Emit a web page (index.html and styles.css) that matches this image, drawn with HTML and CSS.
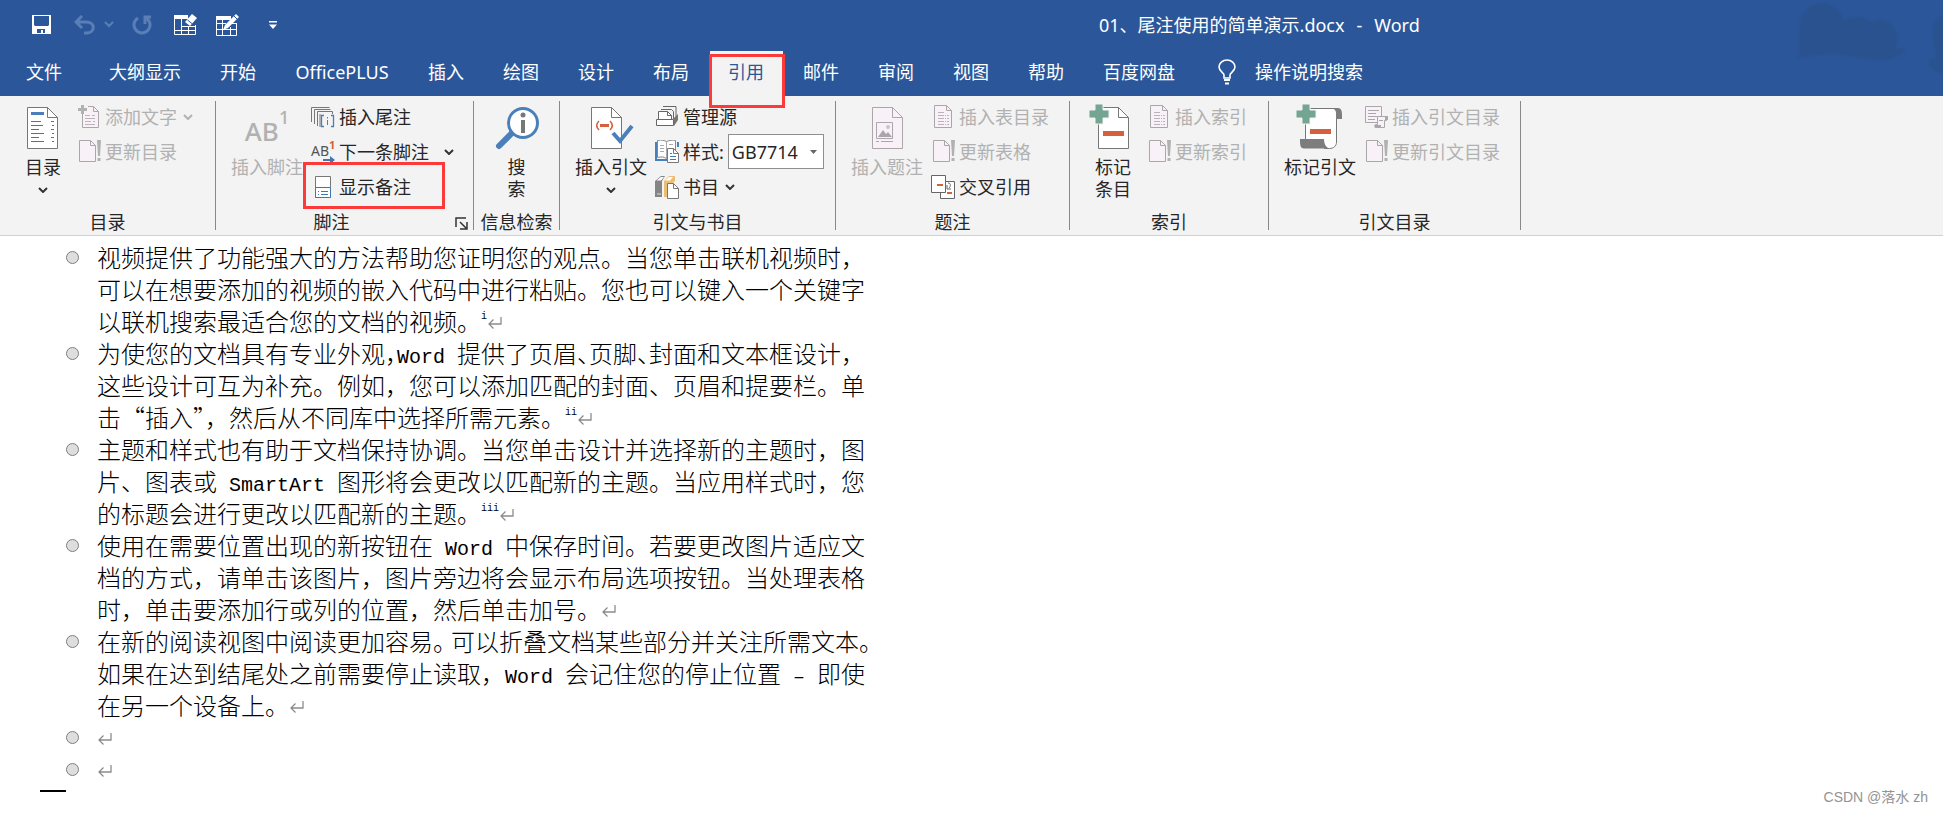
FILE: index.html
```html
<!DOCTYPE html>
<html lang="zh-CN">
<head>
<meta charset="utf-8">
<title>01、尾注使用的简单演示.docx - Word</title>
<link rel="stylesheet" href="styles.css">
</head>
<body>
<svg class="defs" aria-hidden="true">
  <symbol id="chev" viewBox="0 0 10 6"><path d="M1 1l4 4 4-4" fill="none" stroke="currentColor" stroke-width="2"/></symbol>
  <symbol id="update" viewBox="0 0 24 24"><path d="M2.500 .5h11l5 5v16h-16z" fill="#f8f2f8" stroke="#aaa6aa"/><path d="M13.500 .5v5h5" fill="none" stroke="#aaa6aa"/><path d="M20 0h4l-1 16h-2zM20.500 18h3v3h-3z" fill="#b1b1b1"/></symbol>
  <symbol id="list" viewBox="0 0 24 24"><path d="M3.500 .5h12l5 5v17h-17z" fill="#f8f2f8" stroke="#aaa6aa"/><path d="M15.500 .5v5h5" fill="none" stroke="#aaa6aa"/><path d="M7 7.500h6M7 10.500h11M7 13.500h11M7 16.500h11M7 19.500h11" stroke="#b9b5b9" stroke-dasharray="6 1 1 1"/></symbol>
  <symbol id="ret" viewBox="0 0 16 14"><path d="M14 1v7H2M6.500 3.500L2 8l4.500 4.500" fill="none" stroke="#8c8c8c" stroke-width="1.300"/></symbol>
</svg>

<header class="top">
  <svg class="art" viewBox="0 0 200 96" aria-hidden="true">
    <path d="M56 58V30C56 14 66 3 79 3c11 0 18 7 22 18 8-6 21-6 27 2 5-5 16-5 21 3 8 10 7 16 2 22l11 1c-3 8-18 13-32 11-22-3-38-8-54-5-8 1-14 1-20 3z"/>
    <path d="M200 16c-9 2-12 14-9 30 1 6 2 10 4 13l-10 0c1 8 7 13 15 15z"/>
  </svg>
  <div class="titlebar">
    <div class="qat">
      <button type="button" aria-label="保存"><svg width="20" height="20" viewBox="0 0 20 20"><path d="M0 0h19v19H0z" fill="#fff"/><path d="M2 1h15v9l-1 1H3l-1-1z" fill="#2b579a"/><path d="M5 14h8v4h-2v-3h-2v3H5z" fill="#2b579a"/></svg></button>
      <button type="button" aria-label="撤消" class="q-undo"><svg width="40" height="20" viewBox="0 0 40 20" fill="none" stroke="#5a7eb6" stroke-width="3"><path d="M8 1L2 7l6 6M2 7h10c10 0 9 11 1 11h-3"/><path d="M31 7l4 4 4-4" stroke-width="2"/></svg></button>
      <button type="button" aria-label="重复" class="q-redo"><svg width="20" height="20" viewBox="0 0 20 20" fill="none" stroke="#5a7eb6" stroke-width="3"><path d="M6 3a8 8 0 1 0 8 0M13 9V2h6"/></svg></button>
      <button type="button" aria-label="擦除表格" class="q-erase"><svg width="24" height="22" viewBox="0 0 24 22"><path d="M0 1h14v4H0z" fill="#fff"/><path d="M.5 4v16.500h21V11M7.500 5v15M14.500 13v7M7 12.500h14M1 16.500h20" fill="none" stroke="#fff"/><path d="M11 8l7-8 5 4-7 8z" fill="#fff"/><path d="M13.500 6l5 4" stroke="#2b579a"/></svg></button>
      <button type="button" aria-label="绘制表格" class="q-draw"><svg width="24" height="24" viewBox="0 0 24 24"><path d="M0 3h15v4H0z" fill="#fff"/><path d="M.5 4v18.500h20V10M6.500 6v16M14.500 14v8M1 10.500h9M1 16.500h19M15 10.500h5" fill="none" stroke="#fff"/><path d="M9 12L20 1l3 3L12 15l-5 2z" fill="#fff"/><path d="M18 3l3 3" stroke="#2b579a"/></svg></button>
      <button type="button" aria-label="自定义快速访问工具栏" class="q-more"><svg width="8" height="8" viewBox="0 0 8 8" fill="#fff"><path d="M0 0h8v1.500H0zM0 3.500h8L4 8z"/></svg></button>
    </div>
    <div class="doc-title"><span>01、尾注使用的简单演示.docx</span><span>-</span><span>Word</span></div>
  </div>
  <nav class="tabs">
    <button type="button" class="tab file">文件</button>
    <button type="button" class="tab">大纲显示</button>
    <button type="button" class="tab">开始</button>
    <button type="button" class="tab plus">OfficePLUS</button>
    <button type="button" class="tab">插入</button>
    <button type="button" class="tab">绘图</button>
    <button type="button" class="tab">设计</button>
    <button type="button" class="tab">布局</button>
    <button type="button" class="tab active">引用<span class="mark mark-tab"></span></button>
    <button type="button" class="tab">邮件</button>
    <button type="button" class="tab">审阅</button>
    <button type="button" class="tab">视图</button>
    <button type="button" class="tab">帮助</button>
    <button type="button" class="tab">百度网盘</button>
    <button type="button" class="tell"><svg width="18" height="26" viewBox="0 0 18 26" fill="none" stroke="#fff" stroke-width="1.600"><path d="M6 19v-3c0-2-5-4-5-8a8 7 0 0 1 16 0c0 4-5 6-5 8v3z"/><path d="M6 21h6M7 24.500h4" stroke-width="2"/></svg>操作说明搜索</button>
  </nav>
</header>

<section class="ribbon">
  <div class="group g-toc">
    <div class="tools">
      <button type="button" class="big"><svg width="48" height="48" viewBox="0 0 48 48"><path d="M8.500 3.500h20l10 10v31h-30z" fill="#fff" stroke="#777"/><path d="M28.500 3.500v10h10" fill="none" stroke="#777"/><path d="M12 8h13v3H12z" fill="#4a7fb9"/><path d="M12 17.500h10M12 21.500h12M12 25.500h8M12 29.500h13M12 33.500h8M12 37.500h13M32 17.500h3M33 21.500h2M32 25.500h3M33 29.500h2M32 33.500h3M33 37.500h2" stroke="#3f77b5"/></svg><span>目录</span><svg class="chev" width="10" height="6"><use href="#chev"/></svg></button>
      <div class="col">
        <button type="button" class="small" disabled><svg width="24" height="24" viewBox="0 0 24 24"><path d="M5.500 8v14.500h16v-16l-5-5H11" fill="#f8f2f8" stroke="#aaa6aa"/><path d="M16.500 1.500v5h5" fill="none" stroke="#aaa6aa"/><path d="M8 10.500h5M8 13.500h10M8 16.500h6M8 19.500h10M15 10.500h3M16 16.500h2" stroke="#b9b5b9"/><path d="M4 0h3v3h3v3H7v3H4V6H1V3h3z" fill="#b1b1b1"/></svg><span>添加文字</span><svg class="chev" width="10" height="6"><use href="#chev"/></svg></button>
        <button type="button" class="small" disabled><svg width="24" height="24"><use href="#update"/></svg><span>更新目录</span></button>
      </div>
    </div>
    <div class="label">目录</div>
  </div>

  <div class="group g-foot">
    <div class="tools">
      <button type="button" class="big" disabled><span class="ab"><span class="ab-text">AB</span><span class="ab-num">1</span></span><span>插入脚注</span></button>
      <div class="col">
        <button type="button" class="small"><svg width="24" height="24" viewBox="0 0 24 24" fill="none" stroke="#777"><path d="M.5 17V2.500h18M3.500 19V4.500h16M6.500 21V6.500h15V9M9 22V9"/><path d="M13 10.500h-2.500v11H13M20 10.500h2.500v11H20" stroke="#4a7fb9" stroke-width="1.300"/><path d="M16.500 12v1.500M16.500 15v5" stroke="#4a7fb9"/></svg><span>插入尾注</span></button>
        <button type="button" class="small"><span class="ab-small"><span>AB</span><span class="ab-red">1</span><svg width="12" height="8" viewBox="0 0 12 8"><path d="M0 3h7V0l5 4-5 4V5H0z" fill="#3f77b5"/></svg></span><span>下一条脚注</span><svg class="chev far" width="10" height="6"><use href="#chev"/></svg></button>
        <button type="button" class="small"><svg width="24" height="24" viewBox="0 0 24 24"><path d="M4.500 1.500h15v21h-15z" fill="#fff" stroke="#777"/><path d="M4.500 12.500h15v10h-15z" fill="#fff" stroke="#3f77b5"/><path d="M7 16.500h1M7 19.500h1M10 16.500h7M10 19.500h7" stroke="#3f77b5"/></svg><span>显示备注</span><span class="mark mark-note"></span></button>
      </div>
    </div>
    <div class="label">脚注</div>
    <button type="button" class="launch" aria-label="脚注和尾注"><svg width="13" height="13" viewBox="0 0 13 13" fill="none" stroke="#333" stroke-width="1.500"><path d="M1 10V1h10M5 5l6 6M12 5v7H5"/></svg></button>
  </div>

  <div class="group g-search">
    <div class="tools">
      <button type="button" class="big"><svg width="48" height="48" viewBox="0 0 48 48"><path d="M20 28L6 42" stroke="#4a7fb9" stroke-width="6" stroke-linecap="round"/><circle cx="30" cy="19" r="14.500" fill="#fff" stroke="#4a7fb9" stroke-width="3"/><circle cx="30" cy="11" r="2.500" fill="#777"/><path d="M28 16h4v13h-4z" fill="#777"/></svg><span>搜<br>索</span></button>
    </div>
    <div class="label">信息检索</div>
  </div>

  <div class="group g-cite">
    <div class="tools">
      <button type="button" class="big"><svg width="48" height="48" viewBox="0 0 48 48"><path d="M4.500 3.500h20l10 10v31h-30z" fill="#fff" stroke="#777"/><path d="M24.500 3.500v10h10" fill="none" stroke="#777"/><path d="M12 17c-3 3-3 6 0 9M23 17c3 3 3 6 0 9" fill="none" stroke="#d65f3d" stroke-width="1.500"/><path d="M13 20h9v3h-9z" fill="#d65f3d"/><path d="M26 29l7 8 12-15" fill="none" stroke="#4a7fb9" stroke-width="4"/></svg><span>插入引文</span><svg class="chev" width="10" height="6"><use href="#chev"/></svg></button>
      <div class="col">
        <button type="button" class="small"><svg width="24" height="24" viewBox="0 0 24 24" fill="none" stroke="#666"><path d="M1.500 14.500h17v6h-17z" fill="#fff"/><path d="M3.500 14V6.500h9l4 4V14" fill="#fff"/><path d="M12.500 6.500v4h4M6 4.500h10.500l2 2V14M8 1.500h13v12"/><path d="M19 13l4-4v6l-4 6z" fill="#777" stroke="none"/></svg><span>管理源</span></button>
        <div class="small"><svg width="24" height="24" viewBox="0 0 24 24" fill="none"><path d="M1 2v18h11M23 2v5" stroke="#4a7fb9" stroke-width="2"/><path d="M2.500 .5c4-1 7 0 9 1 3-1 6-2 9-1v17c-4-1-7-1-9 1-3-2-5-2-9-1z" fill="#fff" stroke="#888"/><path d="M11.500 2v16M5 5.500h4M5 8.500h4M5 11.500h4M14 4.500h4" stroke="#aaa"/><path d="M12.500 8.500h6l5 5v9h-11z" fill="#fff" stroke="#777"/><path d="M18.500 8.500v5h5" stroke="#777"/><path d="M15 13.500h2M15 16.500h6M15 19.500h6" stroke="#3f77b5"/></svg><label for="style">样式:</label><span class="combo"><select id="style"><option>GB7714</option></select><svg width="7" height="4" viewBox="0 0 7 4" fill="#666"><path d="M0 0h7L3.500 4z"/></svg></span></div>
        <button type="button" class="small"><svg width="24" height="24" viewBox="0 0 24 24"><path d="M0 6l6-5h4L7 6v16H0z" fill="#858585"/><path d="M1.500 5.500L6 2h3L6 5.500z" fill="#fff"/><path d="M9 6l5-5h6v5l-4 4v12H9z" fill="#ecbd74"/><path d="M10 5.500L14 2h4l-3 3.500z" fill="#fff"/><path d="M2 19h4" stroke="#ddd"/><path d="M12.500 8.500h6l5 5v10h-11z" fill="#fff" stroke="#777"/><path d="M18.500 8.500v5h5" fill="none" stroke="#777"/></svg><span>书目</span><svg class="chev" width="10" height="6"><use href="#chev"/></svg></button>
      </div>
    </div>
    <div class="label">引文与书目</div>
  </div>

  <div class="group g-caption">
    <div class="tools">
      <button type="button" class="big" disabled><svg width="48" height="48" viewBox="0 0 48 48"><path d="M9.500 3.500h20l10 10v31h-30z" fill="#f8f2f8" stroke="#aaa6aa"/><path d="M29.500 3.500v10h10M13.500 18.500h16v16h-16z" fill="none" stroke="#aaa6aa"/><path d="M15 33l5-7 3 4 2-2 4 5z" fill="#a9a5a9"/><circle cx="25" cy="23" r="2" fill="#c9c5c9"/><path d="M13 37.500h3M18 37.500h12" stroke="#aaa6aa"/></svg><span>插入题注</span></button>
      <div class="col">
        <button type="button" class="small" disabled><svg width="24" height="24"><use href="#list"/></svg><span>插入表目录</span></button>
        <button type="button" class="small" disabled><svg width="24" height="24"><use href="#update"/></svg><span>更新表格</span></button>
        <button type="button" class="small"><svg width="24" height="24" viewBox="0 0 24 24" fill="#fff" stroke="#666"><path d="M9.500 6.500h14v17h-14z"/><path d="M.5 .5h14v17H.5z"/><path d="M6 9h6v2H6zM16 17h5v2h-5z" fill="#d65f3d" stroke="none"/><path d="M17 8c3 0 3 3 1 5m-2-3v4h4" fill="none"/></svg><span>交叉引用</span></button>
      </div>
    </div>
    <div class="label">题注</div>
  </div>

  <div class="group g-index">
    <div class="tools">
      <button type="button" class="big"><svg width="48" height="48" viewBox="0 0 48 48"><path d="M9.500 3.500h20l10 10v31h-30z" fill="#fff" stroke="#777"/><path d="M29.500 3.500v10h10" fill="none" stroke="#777"/><path d="M14 27h21v5H14z" fill="#d65f3d"/><path d="M6 0h8v6h6v8h-6v6H6v-6H0V6h6z" fill="#73a592" stroke="#f3f3f3"/></svg><span>标记<br>条目</span></button>
      <div class="col">
        <button type="button" class="small" disabled><svg width="24" height="24"><use href="#list"/></svg><span>插入索引</span></button>
        <button type="button" class="small" disabled><svg width="24" height="24"><use href="#update"/></svg><span>更新索引</span></button>
      </div>
    </div>
    <div class="label">索引</div>
  </div>

  <div class="group g-auth">
    <div class="tools">
      <button type="button" class="big"><svg width="48" height="48" viewBox="0 0 48 48"><path d="M9.500 36V4.500h31V38c0 4-3 6.500-7 6.500h-5L24 36z" fill="#fff" stroke="#777"/><path d="M36 4h6c3 0 4 3 4 6v5h-6V9c0-2-1-4-4-5z" fill="#7d7d7d"/><path d="M4 35h24c0 5 2 9 6 9.500H8c-4 0-4-4-4-9.500z" fill="#7d7d7d"/><path d="M14 25h21v5H14z" fill="#d65f3d"/><path d="M6 0h8v6h6v8h-6v6H6v-6H0V6h6z" fill="#73a592" stroke="#f3f3f3"/></svg><span>标记引文</span></button>
      <div class="col">
        <button type="button" class="small" disabled><svg width="24" height="24" viewBox="0 0 24 24" fill="#f8f2f8" stroke="#aaa6aa"><path d="M1.500 1.500h16v16h-16z"/><path d="M4 5.500h11M4 8.500h8M4 11.500h9M4 14.500h7"/><path d="M13.500 11.500h9v4h-2v7h-9v-3h2z"/><path d="M10 20h7v3h-6zM15 15h4v1h-4zM21 11h3v4h-3z" fill="#aaa6aa" stroke="none"/></svg><span>插入引文目录</span></button>
        <button type="button" class="small" disabled><svg width="24" height="24"><use href="#update"/></svg><span>更新引文目录</span></button>
      </div>
    </div>
    <div class="label">引文目录</div>
  </div>
</section>

<main class="page">
  <article class="doc">
    <p>视频提供了功能强大的方法帮助您证明您的观点。当您单击联机视频时，<br>可以在想要添加的视频的嵌入代码中进行粘贴。您也可以键入一个关键字<br>以联机搜索最适合您的文档的视频。<sup>i</sup><svg class="ret"><use href="#ret"/></svg></p>
    <p>为使您的文档具有专业外观<span class="half">，</span><span class="en">Word </span>提供了页眉<span class="half">、</span>页脚<span class="half">、</span>封面和文本框设计，<br>这些设计可互为补充。例如，您可以添加匹配的封面、页眉和提要栏。单<br>击“插入<span class="half">”</span>，然后从不同库中选择所需元素。<sup>ii</sup><svg class="ret"><use href="#ret"/></svg></p>
    <p>主题和样式也有助于文档保持协调。当您单击设计并选择新的主题时，图<br>片、图表或<span class="en"> SmartArt </span>图形将会更改以匹配新的主题。当应用样式时，您<br>的标题会进行更改以匹配新的主题。<sup>iii</sup><svg class="ret"><use href="#ret"/></svg></p>
    <p>使用在需要位置出现的新按钮在<span class="en"> Word </span>中保存时间。若要更改图片适应文<br>档的方式，请单击该图片，图片旁边将会显示布局选项按钮。当处理表格<br>时，单击要添加行或列的位置，然后单击加号。<svg class="ret"><use href="#ret"/></svg></p>
    <p>在新的阅读视图中阅读更加容易<span class="half stop">。</span>可以折叠文档某些部分并关注所需文本。<br>如果在达到结尾处之前需要停止读取，<span class="en">Word </span>会记住您的停止位置<span class="en"> – </span>即使<br>在另一个设备上。<svg class="ret"><use href="#ret"/></svg></p>
    <p><svg class="ret"><use href="#ret"/></svg></p>
    <p><svg class="ret"><use href="#ret"/></svg></p>
  </article>
  <footer class="foot">
    <span class="end"></span>
    <span class="credit">CSDN @落水 zh</span>
  </footer>
</main>
</body>
</html>
```
FILE: styles.css
```css
* { box-sizing: border-box; }

body {
  margin: 0;
  min-height: 100vh;
  display: flex;
  flex-direction: column;
  background: #fff;
  color: #262626;
  font: 18px/22px "Noto Sans", "Noto Sans CJK SC", sans-serif;
}

button {
  border: 0;
  padding: 0;
  background: none;
  color: inherit;
  font: inherit;
  white-space: nowrap;
}

svg { display: block; flex: none; }
.defs { position: absolute; width: 0; height: 0; }

/* Title bar and tabs */
.top {
  position: relative;
  height: 96px;
  background: #2b579a;
  color: #fff;
}
.art {
  position: absolute;
  top: 0;
  right: 0;
  width: 200px;
  height: 96px;
  fill: #29528f;
  filter: blur(1px);
}
.titlebar {
  position: relative;
  display: grid;
  grid-template-columns: 1099fr 844fr;
  align-items: center;
  height: 51px;
}
.qat { display: flex; align-items: center; padding: 0 0 2px 32px; }
.q-undo { margin-left: 22px; }
.q-redo { margin-left: 18px; }
.q-erase { margin-left: 22px; }
.q-draw { margin-left: 18px; }
.q-more { margin-left: 29px; }
.doc-title { display: flex; gap: 12px; padding-bottom: 2px; white-space: nowrap; }

.tabs { position: relative; display: flex; gap: 2px; height: 45px; padding-left: 8px; }
.tab { position: relative; padding: 0 19px 4px 18px; }
.tab.file { margin-right: 8px; }
.tab.plus { min-width: 131px; }
.tab.active { background: #f3f3f3; color: #2b579a; }
.tell { display: flex; align-items: center; gap: 19px; margin-left: 22px; padding-bottom: 3px; }

/* Red highlight frames */
.mark { position: absolute; border: 3px solid #fd3a3a; z-index: 2; }
.mark-tab { top: 3px; left: -1px; right: -2px; height: 54px; }
.mark-note { top: -7px; left: -8px; width: 142px; height: 47px; }

/* Ribbon */
.ribbon {
  display: flex;
  height: 140px;
  padding: 5px 0 5px;
  background: #f3f3f3;
  border-bottom: 1px solid #d0d0d0;
}
.group {
  position: relative;
  flex: none;
  display: flex;
  flex-direction: column;
  justify-content: space-between;
  border-right: 1px solid #888;
}
.tools { display: flex; }
.label { text-align: center; height: 17px; line-height: 18px; }
.big { display: flex; flex-direction: column; align-items: center; align-self: start; gap: 4px; padding-top: 3px; }
.big > span { line-height: 22px; }
.big .chev { margin-top: 5px; }
.col { display: flex; flex-direction: column; margin-top: -2px; }
.small { position: relative; display: flex; align-items: center; gap: 4px; height: 35px; white-space: nowrap; }
.chev { color: #333; }
button:disabled, button:disabled .chev { color: #b1b1b1; }
.small .chev { margin-left: 2px; }
.small .chev.far { margin-left: 11px; }

.g-toc { width: 216px; }
.g-toc .tools { padding-left: 19px; gap: 10px; }
.g-foot { width: 258px; }
.g-foot .tools { padding-left: 15px; gap: 8px; }
.g-foot .label { margin-right: 26px; }
.g-search { width: 86px; }
.g-search .tools { justify-content: center; }
.g-cite { width: 276px; }
.g-cite .tools { padding-left: 15px; gap: 8px; }
.g-caption { width: 234px; }
.g-caption .tools { padding-left: 15px; gap: 8px; }
.g-index { width: 199px; }
.g-index .tools { padding-left: 19px; gap: 10px; }
.g-auth { width: 252px; }
.g-auth .tools { padding-left: 15px; gap: 8px; }

.ab { display: flex; align-items: flex-start; height: 48px; padding-top: 2px; }
.ab-text { padding-top: 11px; font-size: 26px; line-height: 28px; font-weight: 500; }
.ab-num { font-size: 18px; line-height: 22px; font-weight: 500; }
.ab-small { position: relative; display: flex; width: 24px; height: 24px; font-size: 14px; line-height: 22px; color: #555; }
.ab-red { font-size: 11px; line-height: 10px; font-weight: 700; color: #d65f3d; }
.ab-small svg { position: absolute; right: 0; bottom: 0; }

.launch { position: absolute; right: 5px; bottom: 0; }

.combo { position: relative; }
.combo select {
  display: block;
  appearance: none;
  width: 96px;
  height: 35px;
  padding: 0 3px;
  border: 1px solid #8f8f8f;
  border-radius: 0;
  background: #fff;
  color: #262626;
  font: inherit;
}
.combo svg { position: absolute; right: 7px; top: 16px; }

/* Document */
.page { flex: 1; padding: 5px 15px 0 40px; }
.doc {
  padding-left: 57px;
  color: #000;
  font: 24px/32px "Noto Sans CJK SC", sans-serif;
  font-weight: 300;
  white-space: nowrap;
  text-spacing-trim: space-all;
}
.doc p { position: relative; margin: 0; min-height: 32px; }
.doc p::before {
  content: "";
  position: absolute;
  left: -31px;
  top: 10px;
  width: 11px;
  height: 11px;
  border: 1px solid #7f7f7f;
  border-radius: 50%;
  background: #dedede;
}
.en { font: 20px/20px "Liberation Mono", monospace; white-space: pre; }
.doc sup { font: 10px/10px "Liberation Mono", monospace; vertical-align: 12px; }
.half { font-feature-settings: "halt"; }
.stop { padding-right: 6px; }
.ret { display: inline-block; width: 16px; height: 14px; vertical-align: 1px; }
.foot { display: flex; justify-content: space-between; align-items: flex-start; }
.end { width: 26px; height: 2px; margin-top: 5px; background: #000; }
.credit { font: 14px/24px "Liberation Sans", "Noto Sans CJK SC", sans-serif; color: #939393; }
```
